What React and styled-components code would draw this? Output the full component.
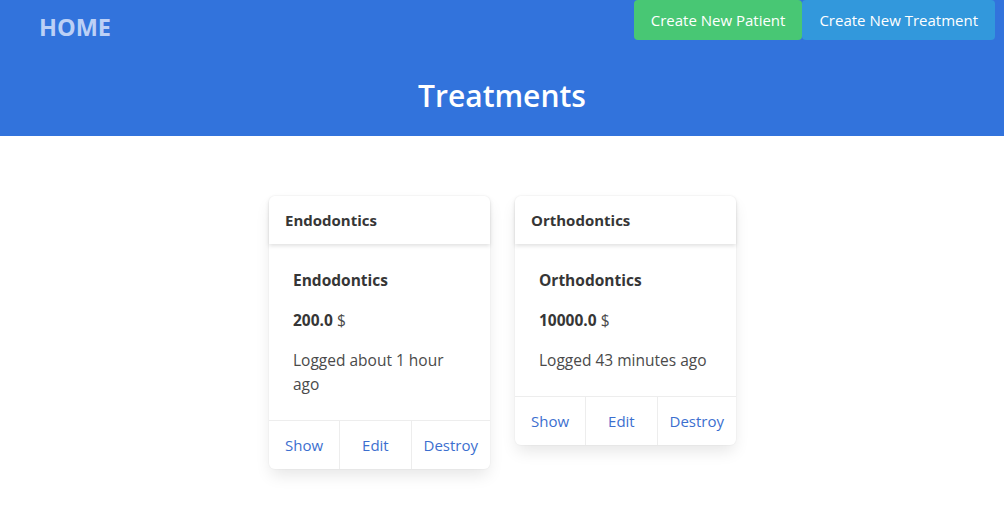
import React from "react";
import styled, { createGlobalStyle } from "styled-components";

const Global = createGlobalStyle`
  html, body { margin: 0; padding: 0; background: #fff; }
  body {
    font-family: "Open Sans", "Noto Sans", sans-serif;
    font-size: 15.5px;
    line-height: 1.5;
    color: #4a4a4a;
  }
  * { box-sizing: border-box; }
`;

const Hero = styled.section`
  background: #3273dc;
  height: 136px;
  display: flex;
  flex-direction: column;
`;

const Nav = styled.nav`
  display: flex;
  align-items: flex-start;
  justify-content: space-between;
  padding: 0 9px 0 39px;
  height: 54px;
`;

const Brand = styled.a`
  font-size: 23.5px;
  font-weight: 700;
  color: #bcd0f6;
  line-height: 1;
  margin-top: 16px;
  text-decoration: none;
`;

const ButtonGroup = styled.div`
  display: flex;
`;

const Button = styled.a`
  display: inline-flex;
  align-items: center;
  height: 40px;
  padding: 0 17px;
  font-size: 15px;
  color: #fff;
  background: ${(p) => p.$bg};
  border-radius: 4px;
  text-decoration: none;
  white-space: nowrap;
`;

const Title = styled.h1`
  margin: 0;
  text-align: center;
  color: #fff;
  font-size: 30px;
  font-weight: 600;
  line-height: 1;
  margin-top: 27px;
`;

const Cards = styled.main`
  display: flex;
  justify-content: center;
  gap: 25px;
  padding-top: 60px;
  padding-left: 1px;
  padding-bottom: 40px;
  align-items: flex-start;
`;

const Card = styled.div`
  width: 221px;
  background: #fff;
  border-radius: 6px;
  box-shadow: 0 8px 16px -2px rgba(10, 10, 10, 0.1), 0 0 0 1px rgba(10, 10, 10, 0.02);
`;

const CardHeader = styled.header`
  padding: 12px 16px;
  font-weight: 700;
  color: #363636;
  font-size: 15px;
  line-height: 24px;
  box-shadow: 0 2px 4px rgba(10, 10, 10, 0.12);
  border-radius: 6px 6px 0 0;
`;

const CardContent = styled.div`
  padding: 24px;
`;

const Para = styled.p`
  margin: 0 0 16px;
  line-height: 24px;
  &:last-child { margin-bottom: 0; }
`;

const Strong = styled.strong`
  color: #363636;
  font-weight: 700;
`;

const Footer = styled.footer`
  display: flex;
  border-top: 1px solid #ededed;
`;

const FooterItem = styled.a`
  flex: 1 0 0;
  display: flex;
  align-items: center;
  justify-content: center;
  height: 48px;
  padding: 0 12px;
  color: #3c6fcf;
  text-decoration: none;
  font-size: 15px;
  white-space: nowrap;
  & + & { border-left: 1px solid #ededed; }
`;

const treatments = [
  { name: "Endodontics", price: "200.0", logged: "Logged about 1 hour ago" },
  { name: "Orthodontics", price: "10000.0", logged: "Logged 43 minutes ago" },
];

export default function App() {
  return (
    <>
      <Global />
      <Hero>
        <Nav>
          <Brand href="#">HOME</Brand>
          <ButtonGroup>
            <Button $bg="#48c774" href="#">Create New Patient</Button>
            <Button $bg="#3298dc" href="#">Create New Treatment</Button>
          </ButtonGroup>
        </Nav>
        <Title>Treatments</Title>
      </Hero>
      <Cards>
        {treatments.map((t) => (
          <Card key={t.name}>
            <CardHeader>{t.name}</CardHeader>
            <CardContent>
              <Para><Strong>{t.name}</Strong></Para>
              <Para><Strong>{t.price}</Strong> $</Para>
              <Para>{t.logged}</Para>
            </CardContent>
            <Footer>
              <FooterItem href="#">Show</FooterItem>
              <FooterItem href="#">Edit</FooterItem>
              <FooterItem href="#">Destroy</FooterItem>
            </Footer>
          </Card>
        ))}
      </Cards>
    </>
  );
}
